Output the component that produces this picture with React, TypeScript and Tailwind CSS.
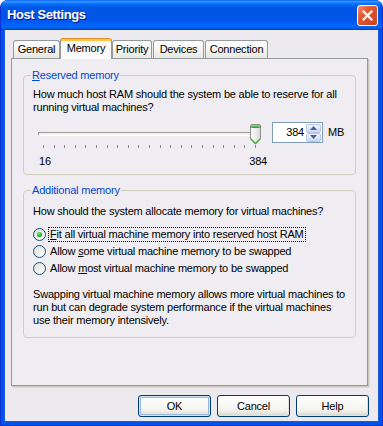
import React from "react";

function CloseButton() {
  return (
    <div className="w-[21px] h-[21px] rounded-[3px] border border-white bg-[linear-gradient(135deg,#F0916E_0%,#E25B36_35%,#C8401D_100%)] flex items-center justify-center">
      <svg width="11" height="11" viewBox="0 0 11 11">
        <path d="M1.5 1.5 L9.5 9.5 M9.5 1.5 L1.5 9.5" stroke="#fff" strokeWidth="2.2" strokeLinecap="square" />
      </svg>
    </div>
  );
}

function Tab({ label, className }: { label: string; className: string }) {
  return (
    <div
      className={
        "h-[18px] border border-b-0 border-[#919B9C] rounded-t-[3px] bg-[linear-gradient(to_bottom,#FFFFFF,#F3F3EF_60%,#E8E7E2)] flex items-center justify-center leading-[13px] " +
        className
      }
    >
      {label}
    </div>
  );
}

function Radio({ checked }: { checked?: boolean }) {
  return (
    <svg width="13" height="13" viewBox="0 0 13 13" className="shrink-0">
      <defs>
        <linearGradient id="rb" x1="0" y1="0" x2="1" y2="1">
          <stop offset="0" stopColor="#DCDCD6" />
          <stop offset="1" stopColor="#FFFFFF" />
        </linearGradient>
        <radialGradient id="rg" cx="0.4" cy="0.35" r="0.7">
          <stop offset="0" stopColor="#7BE37A" />
          <stop offset="1" stopColor="#1A9B1A" />
        </radialGradient>
      </defs>
      <circle cx="6.5" cy="6.5" r="6" fill="url(#rb)" stroke="#1C5180" strokeWidth="1" />
      {checked && <circle cx="6.5" cy="6.5" r="2.6" fill="url(#rg)" />}
    </svg>
  );
}

function Thumb() {
  return (
    <svg width="11" height="21" viewBox="0 0 11 21">
      <defs>
        <linearGradient id="tb" x1="0" y1="0" x2="1" y2="0">
          <stop offset="0" stopColor="#FFFFFF" />
          <stop offset="1" stopColor="#D8D8D2" />
        </linearGradient>
        <linearGradient id="tg" x1="0" y1="0" x2="0" y2="1">
          <stop offset="0" stopColor="#8BE08A" />
          <stop offset="1" stopColor="#21A121" />
        </linearGradient>
      </defs>
      <path d="M0.5 2 Q0.5 0.5 2 0.5 H9 Q10.5 0.5 10.5 2 V15 L5.5 20.2 L0.5 15 Z" fill="url(#tb)" stroke="#8E8F8F" strokeWidth="1" />
      <rect x="1" y="1" width="9" height="3" rx="1" fill="url(#tg)" />
      <path d="M1.2 15 L5.5 19.3 L9.8 15" fill="none" stroke="#3DB53C" strokeWidth="1.2" />
    </svg>
  );
}

function SpinBtn({ up }: { up?: boolean }) {
  return (
    <div className="h-[9px] w-[15px] rounded-[2px] border border-[#B7C8F0] bg-[linear-gradient(to_bottom,#EEF3FE,#C9D8FA)] flex items-center justify-center">
      <svg width="7" height="4" viewBox="0 0 7 4">
        {up ? <path d="M0 4 L3.5 0 L7 4 Z" fill="#4D6185" /> : <path d="M0 0 L3.5 4 L7 0 Z" fill="#4D6185" />}
      </svg>
    </div>
  );
}

function Button({ label, def }: { label: string; def?: boolean }) {
  return (
    <div
      className={
        "w-[73px] h-[22px] rounded-[3px] border border-[#003C74] bg-[linear-gradient(to_bottom,#FFFFFF,#F4F3EE_70%,#E3E0D8_90%,#D6D0C5)] flex items-center justify-center " +
        (def ? "shadow-[inset_0_0_0_1px_#CEE7FF,inset_0_0_0_2px_#98B8EA]" : "shadow-[inset_-1px_-1px_0_#E3E0D8]")
      }
    >
      {label}
    </div>
  );
}

export default function App() {
  const ticks = Array.from({ length: 21 });
  return (
    <div className="w-[383px] h-[426px] bg-white">
      <div className="w-[383px] h-[426px] flex flex-col rounded-t-[8px] overflow-hidden bg-[#0553E6] border-x border-b border-[#0831D9] font-['Liberation_Sans',Arial,sans-serif] text-[11px] tracking-[-0.2px] text-black">
        <div className="h-[30px] shrink-0 flex items-center pl-[6px] pr-[4px] bg-[linear-gradient(to_bottom,#0058EE_0%,#3593FF_4%,#288EFF_7%,#127DFF_10%,#036FFC_14%,#0262EE_20%,#0057E5_24%,#0054E3_56%,#0055EB_66%,#005BF5_76%,#026AFE_86%,#0062EF_92%,#0052D6_96%,#0040AB_100%)]">
          <span className="flex-1 text-white font-bold text-[13px] tracking-[-0.4px] [text-shadow:1px_1px_0_#0A1883]">Host Settings</span>
          <CloseButton />
        </div>
        <div className="flex-1 mx-[3px] mb-[3px] bg-[#ECEAEE] flex flex-col pt-[7px] pl-[7px] pr-[11px] shadow-[inset_1px_0_0_#1D5BD6,inset_-1px_0_0_#1D5BD6,inset_0_-1px_0_#1D5BD6]">
          <div className="flex items-end ml-[2px] h-[21px] relative z-10">
            <Tab label="General" className="w-[47px]" />
            <div className="w-[52px] h-[21px] -mb-[1px] rounded-t-[3px] border-x border-t border-[#919B9C] border-t-[#E68B2C] bg-[#FAFAFB] shadow-[inset_0_2px_0_#FFC73C] flex justify-center pt-[3px] leading-[13px]">
              Memory
            </div>
            <Tab label="Priority" className="w-[40px]" />
            <Tab label="Devices" className="w-[51px] ml-[1px]" />
            <Tab label="Connection" className="w-[63px] ml-[1px]" />
          </div>
          <div className="w-[357px] h-[328px] border border-[#919B9C] bg-[#EFEDF1] shadow-[1px_1px_0_#C9C6BB,2px_2px_0_#DEDCD3] px-[11px] pt-[10px] flex flex-col">
            <fieldset className="border border-[#D0D0BF] rounded-[4px] px-[9px] pb-[6px]">
              <legend className="text-[#0046D5] leading-[13px] px-[1px] -ml-[2px]">
                <u>R</u>eserved memory
              </legend>
              <p className="mt-[6px] leading-[13px]">
                How much host RAM should the system be able to reserve for all running virtual machines?
              </p>
              <div className="flex mt-[8px]">
                <div className="w-[230px] flex flex-col pt-[2px]">
                  <div className="relative h-[21px]">
                    <div className="absolute left-[5px] w-[220px] top-[8px] h-[4px] rounded-[1px] border border-[#9D9C99] border-r-white border-b-white bg-[#F4F4F2]" />
                    <div className="absolute left-[217px] top-0">
                      <Thumb />
                    </div>
                  </div>
                  <div className="ml-[10px] w-[213px] h-[3px] flex justify-between">
                    {ticks.map((_, i) => (
                      <div key={i} className="w-[1px] h-[3px] bg-[#8A8A8A]" />
                    ))}
                  </div>
                  <div className="flex justify-between mt-[7px] leading-[13px] pl-[6px] w-[234px]">
                    <span>16</span>
                    <span>384</span>
                  </div>
                </div>
                <div className="ml-[9px] w-[51px] h-[21px] border border-[#7F9DB9] bg-white flex items-center pr-[1px]">
                  <span className="flex-1 text-right pr-[2px] leading-[13px]">384</span>
                  <div className="flex flex-col">
                    <SpinBtn up />
                    <SpinBtn />
                  </div>
                </div>
                <span className="ml-[5px] leading-[21px]">MB</span>
              </div>
            </fieldset>
            <fieldset className="mt-[9px] border border-[#D0D0BF] rounded-[4px] px-[9px] pb-[10px]">
              <legend className="text-[#0046D5] leading-[13px] px-[1px] -ml-[2px]">Additional memory</legend>
              <p className="mt-[8px] leading-[13px]">How should the system allocate memory for virtual machines?</p>
              <div className="mt-[8px] flex flex-col">
                <div className="h-[17px] flex items-center">
                  <Radio checked />
                  <span className="ml-[2px] px-[1px] leading-[13px] border border-dotted border-black">
                    <u>F</u>it all virtual machine memory into reserved host RAM
                  </span>
                </div>
                <div className="h-[17px] flex items-center">
                  <Radio />
                  <span className="ml-[3px] px-[1px] leading-[13px]">
                    Allow <u>s</u>ome virtual machine memory to be swapped
                  </span>
                </div>
                <div className="h-[17px] flex items-center">
                  <Radio />
                  <span className="ml-[3px] px-[1px] leading-[13px]">
                    Allow <u>m</u>ost virtual machine memory to be swapped
                  </span>
                </div>
              </div>
              <p className="mt-[11px] leading-[13px]">
                Swapping virtual machine memory allows more virtual machines to run but can degrade system performance if the virtual machines use their memory intensively.
              </p>
            </fieldset>
          </div>
          <div className="flex justify-end gap-[6px] mt-[9px] mr-[-1px]">
            <Button label="OK" def />
            <Button label="Cancel" />
            <Button label="Help" />
          </div>
        </div>
      </div>
    </div>
  );
}
